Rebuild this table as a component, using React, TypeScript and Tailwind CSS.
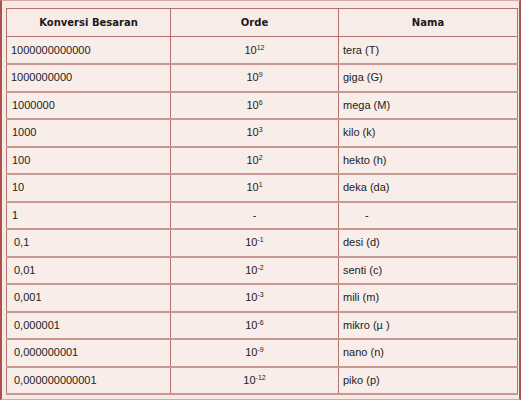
import React from "react";

const rows: { a: string; exp: string | null; name: string; pad?: string }[] = [
  { a: "1000000000000", exp: "12", name: "tera (T)", pad: "pl-[4px]" },
  { a: "1000000000", exp: "9", name: "giga (G)", pad: "pl-[4px]" },
  { a: "1000000", exp: "6", name: "mega (M)", pad: "pl-[5px]" },
  { a: "1000", exp: "3", name: "kilo (k)", pad: "pl-[5px]" },
  { a: "100", exp: "2", name: "hekto (h)", pad: "pl-[5px]" },
  { a: "10", exp: "1", name: "deka (da)", pad: "pl-[5px]" },
  { a: "1", exp: null, name: "-", pad: "pl-[5px]" },
  { a: "0,1", exp: "-1", name: "desi (d)", pad: "pl-[7px]" },
  { a: "0,01", exp: "-2", name: "senti (c)", pad: "pl-[7px]" },
  { a: "0,001", exp: "-3", name: "mili (m)", pad: "pl-[7px]" },
  { a: "0,000001", exp: "-6", name: "mikro (\u00b5 )", pad: "pl-[7px]" },
  { a: "0,000000001", exp: "-9", name: "nano (n)", pad: "pl-[7px]" },
  { a: "0,000000000001", exp: "-12", name: "piko (p)", pad: "pl-[7px]" },
];

export default function App() {
  return (
    <div
      className="w-[521px] h-[400px] bg-[#f7e9e4] border-l-2 border-r-2 border-l-[#a9544f] border-r-[#a9544f] border-t border-b border-t-[#d8a9a4] border-b-[#d8a9a4] pt-[7px] pl-[4px]"
      style={{ fontFamily: '"Liberation Sans", Arial, sans-serif' }}
    >
      <table className="border-collapse w-[511px] table-fixed text-[11px] text-[#222]">
        <colgroup>
          <col className="w-[164px]" />
          <col className="w-[168px]" />
          <col className="w-[179px]" />
        </colgroup>
        <thead>
          <tr className="h-[28px] bg-[#f8ece8]">
            <th
              className="border border-[#b4726c] font-bold text-center text-[#1a1a1a]"
              style={{ fontFamily: '"DejaVu Sans", Verdana, sans-serif', fontSize: "10px" }}
            >
              Konversi Besaran
            </th>
            <th
              className="border border-[#b4726c] font-bold text-center text-[#1a1a1a]"
              style={{ fontFamily: '"DejaVu Sans", Verdana, sans-serif', fontSize: "10px" }}
            >
              Orde
            </th>
            <th
              className="border border-[#b4726c] font-bold text-center text-[#1a1a1a]"
              style={{ fontFamily: '"DejaVu Sans", Verdana, sans-serif', fontSize: "10px" }}
            >
              Nama
            </th>
          </tr>
        </thead>
        <tbody>
          {rows.map((r, i) => (
            <tr
              key={i}
              className={(i % 2 === 0 ? "h-[27px]" : "h-[28px]") + " bg-[#f8ede8]"}
            >
              <td className={"border border-[#b4726c] border-b-2 border-b-[#c99792] " + (r.pad ?? "")}>
                {r.a}
              </td>
              <td className="border border-[#b4726c] border-b-2 border-b-[#c99792] text-center">
                {r.exp === null ? (
                  "-"
                ) : (
                  <span>
                    10
                    <span className="text-[7px] relative -top-[4px]">{r.exp}</span>
                  </span>
                )}
              </td>
              <td
                className={
                  "border border-[#b4726c] border-b-2 border-b-[#c99792] " +
                  (r.name === "-" ? "pl-[26px]" : "pl-[4px]")
                }
              >
                {r.name}
              </td>
            </tr>
          ))}
        </tbody>
      </table>
    </div>
  );
}
